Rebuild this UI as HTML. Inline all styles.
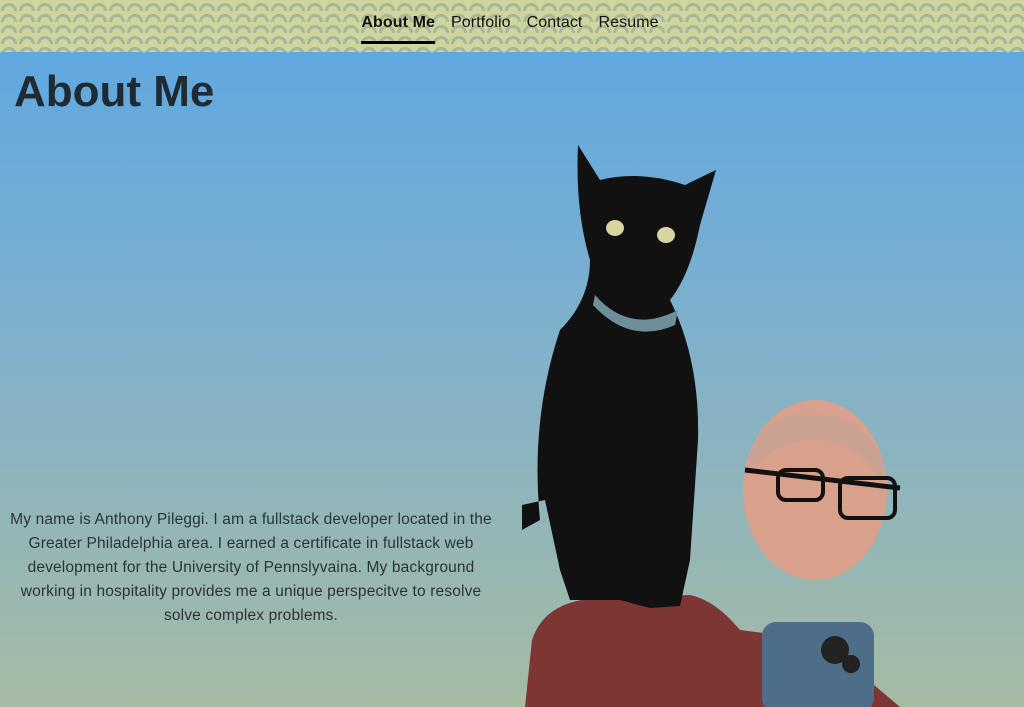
<!DOCTYPE html>
<html><head><meta charset="utf-8"><style>
*{margin:0;padding:0;box-sizing:border-box}
body{width:1024px;height:707px;overflow:hidden;font-family:"Liberation Sans",sans-serif;background:linear-gradient(#60a8e0 52px,#7fb0cc 330px,#a6bba4 707px);position:relative}
nav{height:52px;background-color:#cdd69c;background-image:radial-gradient(circle at 50% 100%,transparent 5px,#a8b69c 5px,#a8b69c 8px,transparent 8px);background-size:18px 11px;display:flex;justify-content:center;padding-right:4px}
nav a{font-size:16px;color:#111;text-decoration:none;margin:0 8px;padding-top:14px;height:44px;letter-spacing:0.1px}
nav a.on{font-weight:bold;border-bottom:3px solid #000}
h1{position:absolute;left:14px;top:67px;font-size:44px;font-weight:bold;color:#1f2a33;letter-spacing:0}
p{position:absolute;left:4px;top:508px;width:494px;text-align:center;font-size:15.5px;line-height:24px;color:#2a3338;letter-spacing:0.15px}
svg{position:absolute;left:0;top:0}
</style></head><body>
<nav><a class="on">About Me</a><a>Portfolio</a><a>Contact</a><a>Resume</a></nav>
<h1>About Me</h1>
<svg width="1024" height="707">
<path d="M525 707 L532 640 Q545 600 600 598 L690 595 Q715 600 740 630 L820 640 L880 690 L900 707Z" fill="#7e3634"/>
<path d="M578 145 L600 180 Q640 170 685 185 L716 170 L700 225 Q690 275 670 300 Q700 360 698 440 L690 560 L680 606 L650 608 L620 600 L570 600 L560 570 L545 500 L522 505 L522 530 L540 520 Q530 420 560 330 Q590 300 590 260 Q575 210 578 145Z" fill="#111"/>
<ellipse cx="615" cy="228" rx="9" ry="8" fill="#d8d6a0"/><ellipse cx="666" cy="235" rx="9" ry="8" fill="#d8d6a0"/>
<path d="M595 295 Q630 335 678 310 L675 325 Q630 345 593 305Z" fill="#6e8f9a"/>
<ellipse cx="815" cy="490" rx="72" ry="90" fill="#d9a08c"/>
<path d="M750 460 Q760 410 815 415 Q870 415 885 470 L878 480 Q860 440 810 440 Q770 445 752 470Z" fill="#caa292"/>
<path d="M745 470 L900 488" stroke="#111" stroke-width="5"/>
<rect x="778" y="470" width="45" height="30" rx="8" fill="none" stroke="#111" stroke-width="4"/>
<rect x="840" y="478" width="55" height="40" rx="8" fill="none" stroke="#111" stroke-width="4"/>
<rect x="762" y="622" width="112" height="90" rx="14" fill="#4d6d88"/>
<circle cx="835" cy="650" r="14" fill="#222"/><circle cx="851" cy="664" r="9" fill="#222"/>
</svg>
<p>My name is Anthony Pileggi. I am a fullstack developer located in the Greater Philadelphia area. I earned a certificate in fullstack web development for the University of Pennslyvaina. My background working in hospitality provides me a unique perspecitve to resolve solve complex problems.</p>
</body></html>
